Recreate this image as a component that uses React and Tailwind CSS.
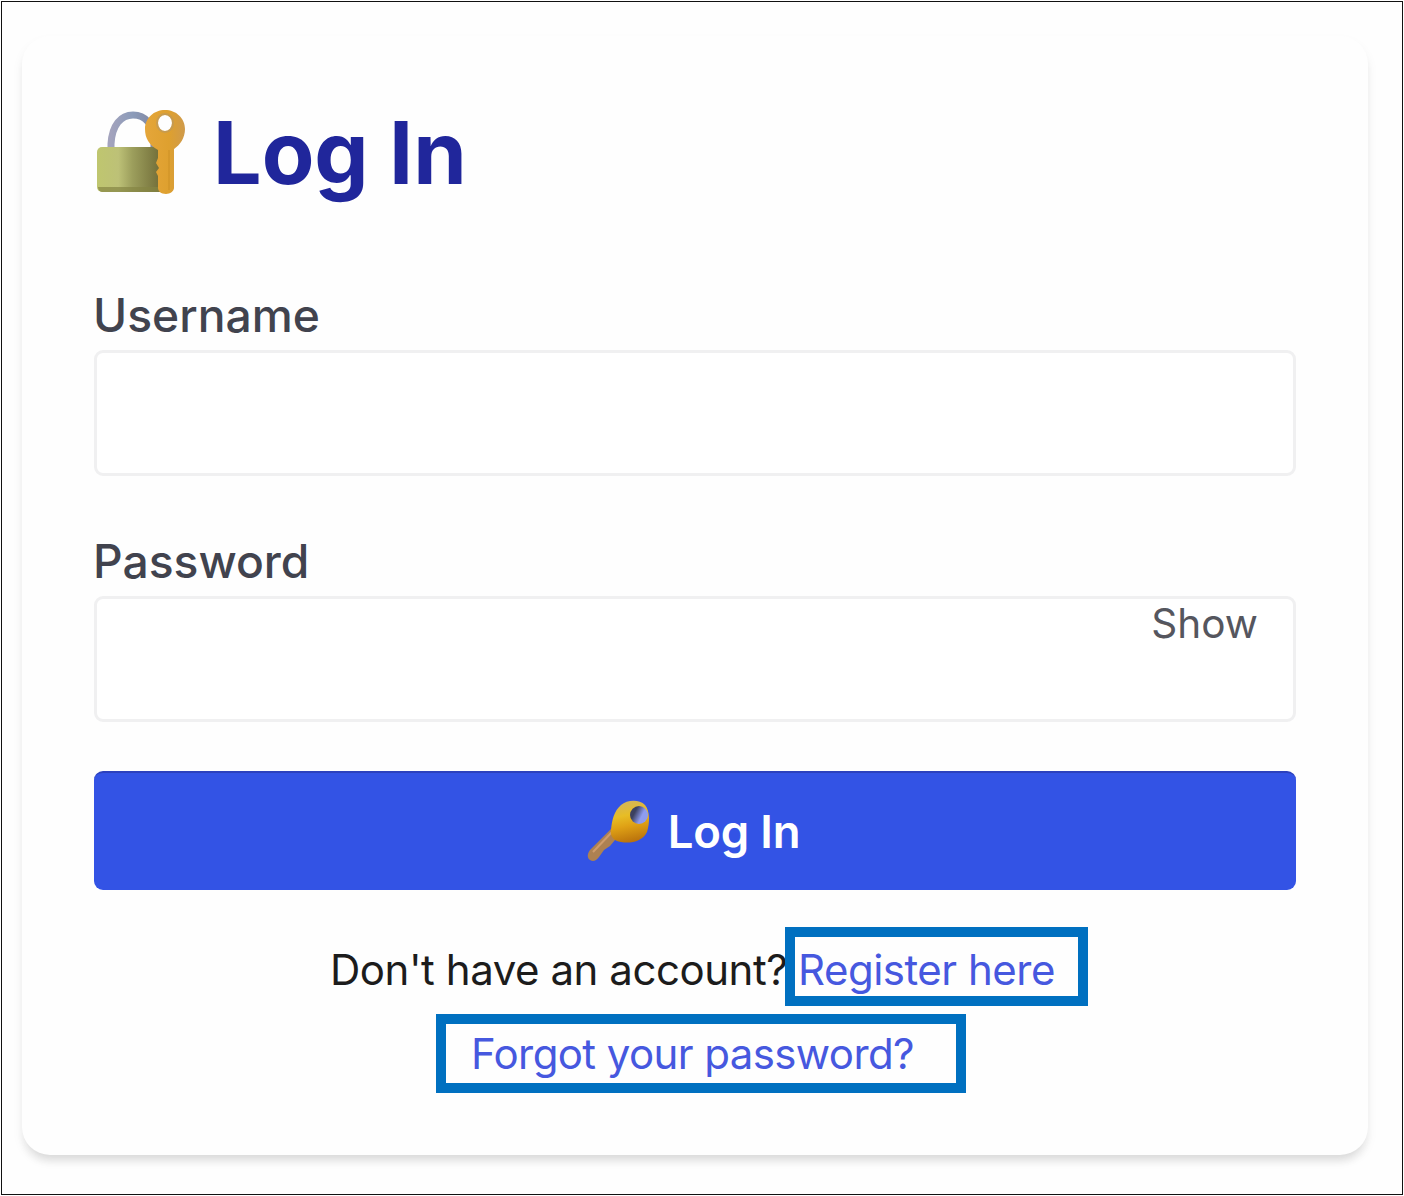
function LockWithKey() {
  return (
    <svg viewBox="0 0 96 90" className="mt-[2px] ml-[4px] h-[90px] w-[96px] shrink-0">
      <defs>
        <linearGradient id="lockBody" x1="0" x2="1">
          <stop offset="0" stopColor="#bfc66f" />
          <stop offset="0.3" stopColor="#bdc177" />
          <stop offset="0.5" stopColor="#9c9e5c" />
          <stop offset="1" stopColor="#66602f" />
        </linearGradient>
        <linearGradient id="shackle" x1="0" x2="1">
          <stop offset="0" stopColor="#a3a3bd" />
          <stop offset="0.5" stopColor="#8b9bb9" />
          <stop offset="1" stopColor="#8087a2" />
        </linearGradient>
        <linearGradient id="goldKey" x1="0" x2="1">
          <stop offset="0" stopColor="#e5a63a" />
          <stop offset="0.6" stopColor="#dea02f" />
          <stop offset="1" stopColor="#cf9a4b" />
        </linearGradient>
      </defs>
      <path d="M14 42V36C15 17 24 7 36 7s21 9 21 27v8" fill="none" stroke="url(#shackle)" strokeWidth="7" />
      <rect x="0" y="39" width="71" height="45" rx="5" fill="url(#lockBody)" />
      <path d="M1 79h67v1c0 3-2 4-5 4H6c-3 0-5-2-5-5z" fill="#858443" opacity=".7" />
      <path
        fillRule="evenodd"
        d="M68 2c11 0 20 8 20 19 0 9-5 16-11 20v39c0 3-4 6-8 6-5 0-8-3-8-6V68l-2-4 3-4-3-5 2-5v-8c-9-5-13-12-13-21C48 10 57 2 68 2zm0 5a7 8 0 1 0 0 16 7 8 0 0 0 0-16z"
        fill="url(#goldKey)"
      />
      <path d="M72 42v40" stroke="#c88d24" strokeWidth="2" opacity=".4" />
      <ellipse cx="68" cy="15" rx="8" ry="9" fill="none" stroke="#b79763" strokeWidth="2" opacity=".6" />
    </svg>
  );
}

function GoldKey() {
  return (
    <svg viewBox="0 0 66 66" className="h-[66px] w-[66px] shrink-0">
      <defs>
        <linearGradient id="keyHead" x1="0.3" y1="0" x2="0.5" y2="1">
          <stop offset="0" stopColor="#d3b45d" />
          <stop offset="0.35" stopColor="#e7bd25" />
          <stop offset="0.6" stopColor="#dfa115" />
          <stop offset="1" stopColor="#b9710c" />
        </linearGradient>
        <linearGradient id="keyHole" x1="0" y1="0" x2="1" y2="0.5">
          <stop offset="0.35" stopColor="#3c4160" />
          <stop offset="0.75" stopColor="#8e9cf0" />
        </linearGradient>
      </defs>
      <path d="M26 29 4 51c-3 4-3 8 0 10 3 2 6 1 9-3l5-7 6-4 5-6 5-4z" fill="#ad8152" />
      <path d="M26 33 7 53" stroke="#cf9c6c" strokeWidth="2" />
      <path d="M35 6c6-5 18-6 24 0 5 6 5 18 2 27-4 9-16 12-26 10-7-1-11-5-10-12 1-10 3-19 10-25z" fill="url(#keyHead)" />
      <ellipse cx="53" cy="16" rx="9" ry="9" fill="url(#keyHole)" />
    </svg>
  );
}

function Field({ label, id, type, children }) {
  return (
    <div className="flex flex-col">
      <label htmlFor={id} className="h-[60px] text-[46.200px] leading-[60px] font-medium text-[#41434e]">
        {label}
      </label>
      <div className="relative mt-[5px] h-[126px] px-px">
        <input id={id} type={type} className="h-full w-full rounded-[9px] border-[3px] border-[#f0f0f1] bg-white px-6 text-4xl outline-none" />
        {children}
      </div>
    </div>
  );
}

export default function App() {
  return (
    <div className="h-[1196px] w-[1404px] bg-white p-px font-['Inter',sans-serif]">
      <div className="h-[1194px] w-[1402px] border border-[#111] bg-[#fefefe] pt-[34px] pl-[20px]">
        <main className="flex h-[1119px] w-[1346px] flex-col rounded-[28px] bg-[#fefefe] pt-[70px] pr-[71px] pl-[71px] shadow-[0_8px_8px_-4px_#d8d8d8,0_6px_12px_0px_#f2f2f2]">
          <h1 className="flex h-[100px] items-start gap-[20px] text-[86px] leading-[95px] font-bold text-[#20269b]">
            <LockWithKey />
            <span>Log In</span>
          </h1>
          <form className="mt-[79px] flex flex-col" onSubmit={(e) => e.preventDefault()}>
            <Field label="Username" id="username" type="text" />
            <div className="h-[55px]" />
            <Field label="Password" id="password" type="password">
              <button type="button" className="absolute top-[3px] right-[39px] text-[40.500px] leading-[50px] text-[#55565e]">
                Show
              </button>
            </Field>
            <button className="mx-px mt-[49px] flex h-[119px] items-center justify-center gap-[16px] rounded-[9px] border-t-2 border-[#2c41bd] bg-[#3353e5] pr-[4px] text-[45.500px] font-semibold text-white">
              <GoldKey />
              <span className="pt-[2px] tracking-[-0.2px]">Log In</span>
            </button>
          </form>
          <div className="mt-[37px] flex h-[79px] items-center pl-[237px] text-[42px] whitespace-nowrap">
            <span className="w-[455px] pt-[5px] tracking-[-0.45px] text-[#1c1c1c]">Don&apos;t have an account?</span>
            <a href="#register" className="flex h-[79px] w-[303px] items-center border-[10px] border-[#0070c0] pt-[5px] pl-[3px] tracking-[-0.5px] text-[#4658df]">
              Register here
            </a>
          </div>
          <a href="#forgot" className="mt-[8px] ml-[343px] flex h-[79px] w-[530px] shrink-0 items-center border-[10px] border-[#0070c0] pl-[25px] text-[42px] tracking-[-0.6px] text-[#4658df]">
            Forgot your password?
          </a>
        </main>
      </div>
    </div>
  );
}
